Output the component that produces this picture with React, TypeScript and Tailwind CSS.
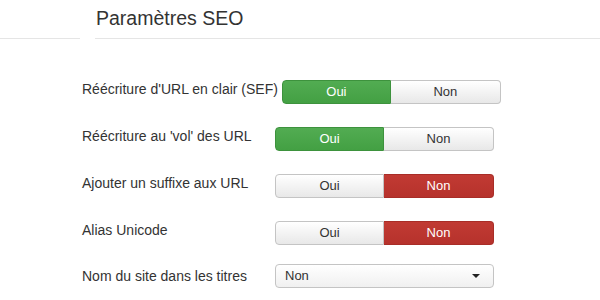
import React from 'react';

type Choice = 'oui' | 'non';

interface ToggleRowProps {
  label: string;
  value: Choice;
}

const ToggleRow: React.FC<ToggleRowProps> = ({ label, value }) => (
  <div className="flex items-center">
    <div className="min-w-[189px] mr-1 text-[14px] text-[#333] leading-[18px] -mt-[6px]">{label}</div>
    <div className="flex w-[219px] h-6 text-[13px] leading-[22px]">
      <div
        className={`w-[109px] text-center rounded-l-[4px] border ${
          value === 'oui'
            ? 'bg-gradient-to-b from-[#52ac52] to-[#43a043] border-[#3d923d] text-white'
            : 'bg-gradient-to-b from-white to-[#e8e8e8] border-[#c4c4c4] text-[#333]'
        }`}
      >
        Oui
      </div>
      <div
        className={`flex-1 text-center rounded-r-[4px] border border-l-0 ${
          value === 'non'
            ? 'bg-gradient-to-b from-[#c13a33] to-[#b6322c] border-[#a82d27] text-white'
            : 'bg-gradient-to-b from-white to-[#e8e8e8] border-[#c4c4c4] text-[#333]'
        }`}
      >
        Non
      </div>
    </div>
  </div>
);

export default function App() {
  return (
    <div className="w-[600px] h-[300px] bg-white overflow-hidden font-['Liberation_Sans',Arial,sans-serif]">
      {/* Title bar */}
      <div className="flex items-end h-[39px]">
        <div className="w-20 border-b border-[#e5e5e5]" />
        <div className="flex-1 ml-[15px] border-b border-[#e5e5e5] pb-[8px]">
          <h2 className="text-[19.5px] leading-6 text-[#333] ml-px">Paramètres SEO</h2>
        </div>
      </div>

      <div className="pl-[82px] pt-[41px] flex flex-col gap-[23px]">
        <ToggleRow label="Réécriture d'URL en clair (SEF)" value="oui" />
        <ToggleRow label="Réécriture au 'vol' des URL" value="oui" />
        <ToggleRow label="Ajouter un suffixe aux URL" value="non" />
        <ToggleRow label="Alias Unicode" value="non" />
        <div className="flex items-center -mt-[4px]">
          <div className="min-w-[189px] mr-1 text-[14px] text-[#333] leading-[18px]">Nom du site dans les titres</div>
          <div className="w-[219px] h-6 flex items-center justify-between border border-[#c4c4c4] rounded-[4px] bg-gradient-to-b from-white to-[#f0f0f0] pl-[9px] pr-[13px] text-[13px] text-[#333]">
            <span>Non</span>
            <svg width="8" height="4" viewBox="0 0 8 4">
              <path d="M0 0 L8 0 L4 4 Z" fill="#222" />
            </svg>
          </div>
        </div>
      </div>
    </div>
  );
}
